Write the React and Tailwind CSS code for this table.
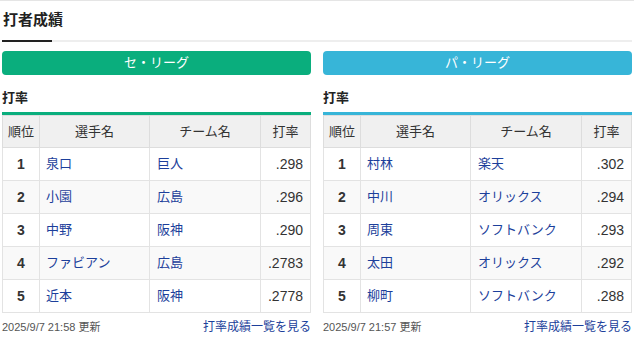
import React from 'react';

const leagues = [
  {
    name: 'セ・リーグ',
    btn: 'bg-[#0aae7d]',
    bar: 'bg-[#0aae7d]',
    updated: '2025/9/7 21:58 更新',
    rows: [
      ['1', '泉口', '巨人', '.298'],
      ['2', '小園', '広島', '.296'],
      ['3', '中野', '阪神', '.290'],
      ['4', 'ファビアン', '広島', '.2783'],
      ['5', '近本', '阪神', '.2778'],
    ],
  },
  {
    name: 'パ・リーグ',
    btn: 'bg-[#37b5d8]',
    bar: 'bg-[#37b5d8]',
    updated: '2025/9/7 21:57 更新',
    rows: [
      ['1', '村林', '楽天', '.302'],
      ['2', '中川', 'オリックス', '.294'],
      ['3', '周東', 'ソフトバンク', '.293'],
      ['4', '太田', 'オリックス', '.292'],
      ['5', '柳町', 'ソフトバンク', '.288'],
    ],
  },
];

function LeagueBox({ league }) {
  return (
    <div className="flex flex-col">
      <div className={`h-[24px] rounded-[4px] ${league.btn} text-white text-[13px] leading-[24px] text-center`}>
        {league.name}
      </div>
      <h3 className="mt-[14px] mb-[5px] h-[18px] leading-[18px] text-[13px] font-bold text-[#222]">打率</h3>
      <div className={`h-[3px] ${league.bar}`} />
      <table className="w-full border-collapse table-fixed text-[13px] text-[#333]">
        <colgroup>
          <col className="w-[37px]" />
          <col className="w-[110px]" />
          <col className="w-[111px]" />
          <col />
        </colgroup>
        <thead>
          <tr className="bg-[#f0f0f0] h-[32px]">
            <th className="border border-[#dddddd] font-normal">順位</th>
            <th className="border border-[#dddddd] font-normal">選手名</th>
            <th className="border border-[#dddddd] font-normal">チーム名</th>
            <th className="border border-[#dddddd] font-normal">打率</th>
          </tr>
        </thead>
        <tbody>
          {league.rows.map((r, i) => (
            <tr key={i} className={`h-[33px] ${i % 2 === 1 ? 'bg-[#f9f9f9]' : 'bg-white'}`}>
              <td className="border border-[#e3e3e3] text-center font-bold text-[14px]">{r[0]}</td>
              <td className="border border-[#e3e3e3] pl-[6px] text-[#1c3f9b] whitespace-nowrap">{r[1]}</td>
              <td className="border border-[#e3e3e3] pl-[7px] text-[#1c3f9b] whitespace-nowrap">{r[2]}</td>
              <td className="border border-[#e3e3e3] pr-[7px] text-right text-[14px]">{r[3]}</td>
            </tr>
          ))}
        </tbody>
      </table>
      <div className="flex justify-between items-center mt-[5px] h-[18px]">
        <span className="text-[11px] text-[#555]">{league.updated}</span>
        <span className="text-[12px] text-[#1c3f9b]">打率成績一覧を見る</span>
      </div>
    </div>
  );
}

export default function App() {
  return (
    <div className="w-[634px] h-[339px] bg-white border-t border-[#e5e5e5] font-['Liberation_Sans','Noto_Sans_CJK_JP',sans-serif] overflow-hidden">
      <div className="mx-[2px] h-[41px] flex items-end border-b-2 border-[#eeeeee]">
        <h2 className="w-[50px] -mb-[2px] pb-[9px] border-b-2 border-[#222] text-[15px] font-bold text-[#222] leading-[22px] pl-[1px] whitespace-nowrap">
          打者成績
        </h2>
      </div>
      <div className="grid grid-cols-2 gap-[12px] px-[2px] mt-[9px]">
        {leagues.map((l) => (
          <LeagueBox key={l.name} league={l} />
        ))}
      </div>
    </div>
  );
}
